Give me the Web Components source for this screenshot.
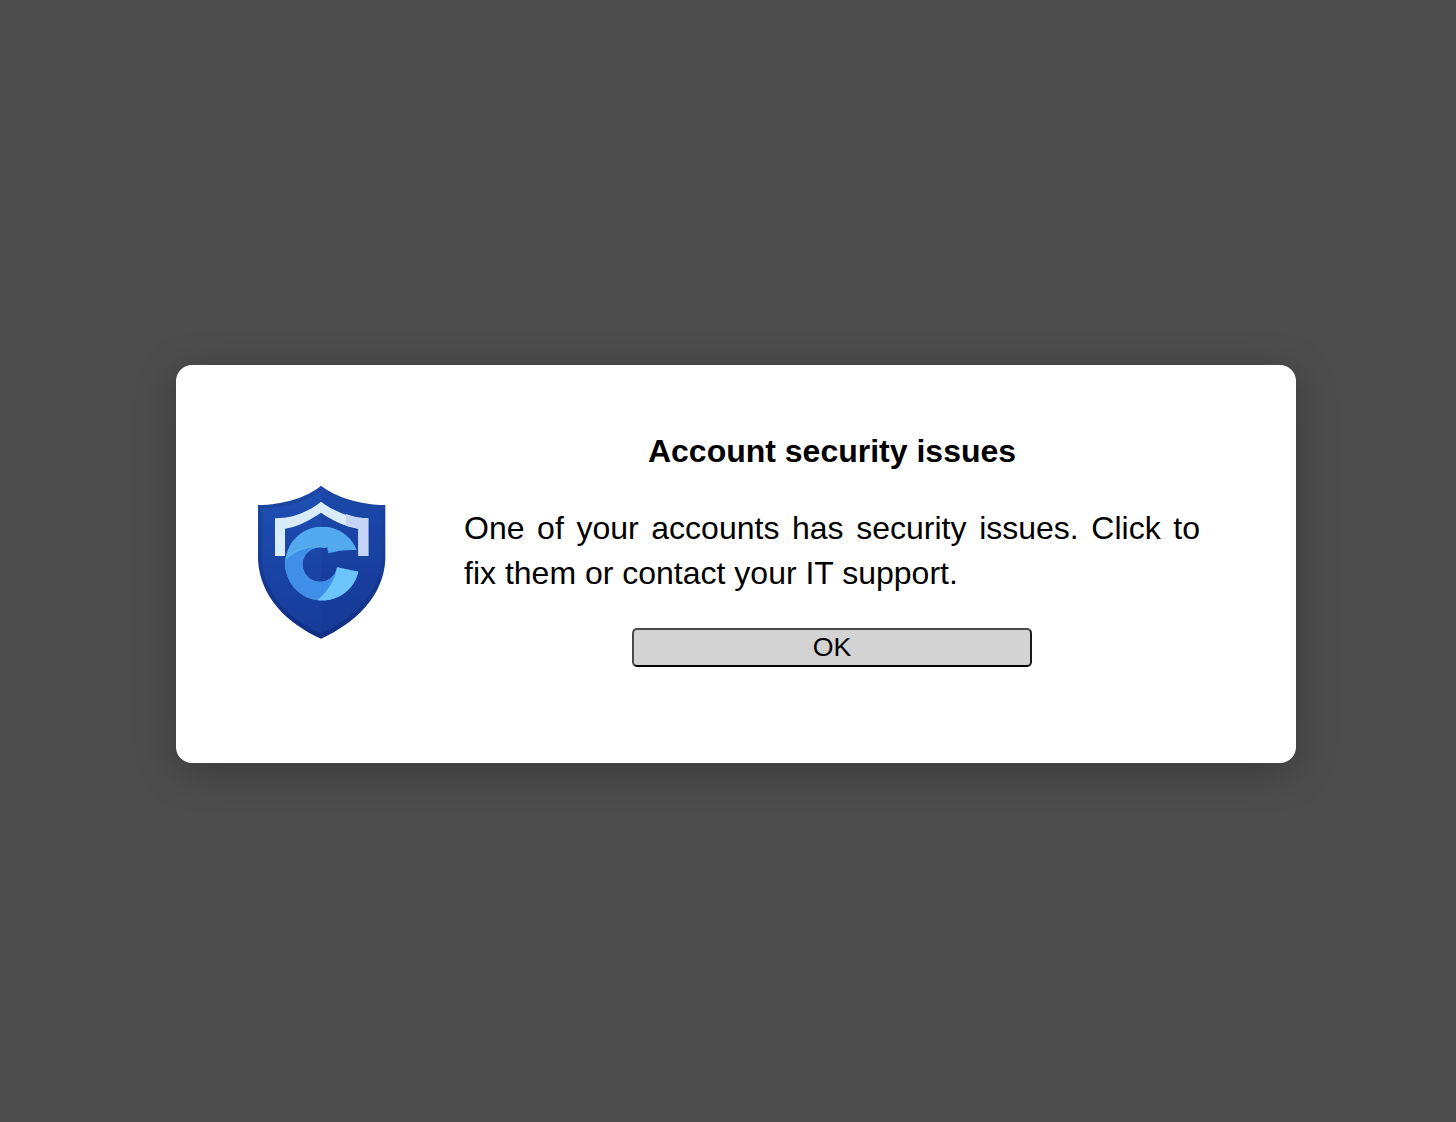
<!DOCTYPE html>
<html lang="en">
<head>
<meta charset="utf-8">
<title>Account security issues</title>
<style>
    html, body { margin: 0; height: 100%; }
    body { font-family: "Liberation Sans", Arial, sans-serif; }
</style>
</head>
<body>

<template id="security-overlay">
    <style>
        :host {
            display: flex;
            box-sizing: border-box;
            height: 1122px;
            padding: 365px 160px 359px 176px;
            background-color: #4d4d4d;
        }
    </style>
    <slot></slot>
</template>

<template id="security-dialog">
    <style>
        :host {
            display: grid;
            grid-template-columns: 288px 736px;
            width: 1120px;
            height: 398px;
            background-color: white;
            border-radius: 16px;
            box-shadow: 0 8px 40px rgba(0,0,0,0.25);
            color: black;
        }
        .logo {
            display: flex;
            align-items: center;
            justify-content: center;
            padding-bottom: 8px;
        }
        .content {
            display: flex;
            flex-direction: column;
            align-items: center;
            padding-top: 68px;
        }
        .headline {
            margin: 0;
            font-size: 32px;
            line-height: 36px;
            font-weight: 700;
        }
        .message {
            margin: 37px 0 32px 0;
            width: 100%;
            font-size: 32px;
            line-height: 45px;
            text-align: justify;
        }
    </style>
    <div class="logo"><slot name="logo"></slot></div>
    <div class="content">
        <h2 class="headline"><slot name="headline"></slot></h2>
        <p class="message"><slot name="message"></slot></p>
        <slot name="action"></slot>
    </div>
</template>

<template id="security-logo">
    <style>
        :host { display: block; width: 160px; height: 180px; }
        svg { display: block; filter: blur(0.5px); }
    </style>
    <svg width="160" height="180" viewBox="0 0 480 540">
        <defs>
            <linearGradient id="rim" x1="0" y1="0" x2="0" y2="1">
                <stop offset="0" stop-color="#1c49a6"/>
                <stop offset="1" stop-color="#102f85"/>
            </linearGradient>
            <linearGradient id="body" x1="0" y1="0" x2="0" y2="1">
                <stop offset="0" stop-color="#1d4fb2"/>
                <stop offset="1" stop-color="#173c9b"/>
            </linearGradient>
            <clipPath id="letter">
                <path d="M350 240A111 111 0 1 0 355 305L291 292A52 52 0 1 1 252 233L262 232L265 250Q305 238 350 240Z"/>
            </clipPath>
        </defs>
        <!-- shield -->
        <path fill="url(#rim)" d="M243 47C205 80 130 105 54 105L54 270C60 380 140 460 243 506C345 460 430 380 436 270L436 105C360 105 285 80 243 47Z"/>
        <path fill="url(#body)" d="M243 62C205 92 135 114 66 116L66 270C72 372 145 446 243 490C340 446 418 372 424 270L424 116C355 114 285 92 243 62Z"/>
        <path fill="#0f2f86" opacity="0.18" d="M243 62C285 92 355 114 424 116L424 270C418 372 340 446 243 490Z"/>
        <!-- frame -->
        <path fill="#d9ecfc" d="M105 145C160 145 205 125 243 95C285 125 330 145 385 145L385 258L355 258L355 176C315 170 275 150 243 128C210 150 175 170 135 176L135 258L105 258Z"/>
        <path fill="#c6d5f6" d="M318 132C340 140 362 145 385 145L385 258L355 258L355 176C342 174 330 171 318 166Z"/>
        <!-- letter -->
        <g clip-path="url(#letter)">
            <rect x="120" y="170" width="250" height="245" fill="#52a9f0"/>
            <path fill="#56b0f0" d="M130 268C160 232 215 222 262 232L262 245C215 236 165 250 140 310L120 310Z"/>
            <path fill="#3f8fe8" d="M133 275C165 238 215 226 262 236L300 290C288 335 255 375 223 402L120 420Z"/>
            <path fill="#6cc5fa" d="M291 292C285 335 255 375 223 398L370 410L370 292Z"/>
        </g>
    </svg>
</template>

<template id="security-button">
    <style>
        :host { display: block; }
        button {
            display: block;
            box-sizing: border-box;
            width: 400px;
            height: 39px;
            padding: 0;
            background-color: #d3d3d3;
            border: 2px solid;
            border-color: #4a4a4a #1a1a1a #000 #4a4a4a;
            border-radius: 5px;
            font-family: inherit;
            font-size: 26.67px;
            color: black;
        }
    </style>
    <button type="button"><slot></slot></button>
</template>

<security-overlay>
    <security-dialog>
        <security-logo slot="logo"></security-logo>
        <span slot="headline">Account security issues</span>
        <span slot="message">One of your accounts has security issues. Click to fix them or contact your IT support.</span>
        <security-button slot="action">OK</security-button>
    </security-dialog>
</security-overlay>

<script>
    function defineFromTemplate(name) {
        const template = document.getElementById(name).content;

        class SecurityElement extends HTMLElement {
            constructor() {
                super();
                this.attachShadow({ mode: 'open' });
                this.shadowRoot.appendChild(document.importNode(template, true));
            }
        }

        window.customElements.define(name, SecurityElement);
    }

    ['security-overlay', 'security-dialog', 'security-logo', 'security-button'].forEach(defineFromTemplate);
</script>
</body>
</html>
